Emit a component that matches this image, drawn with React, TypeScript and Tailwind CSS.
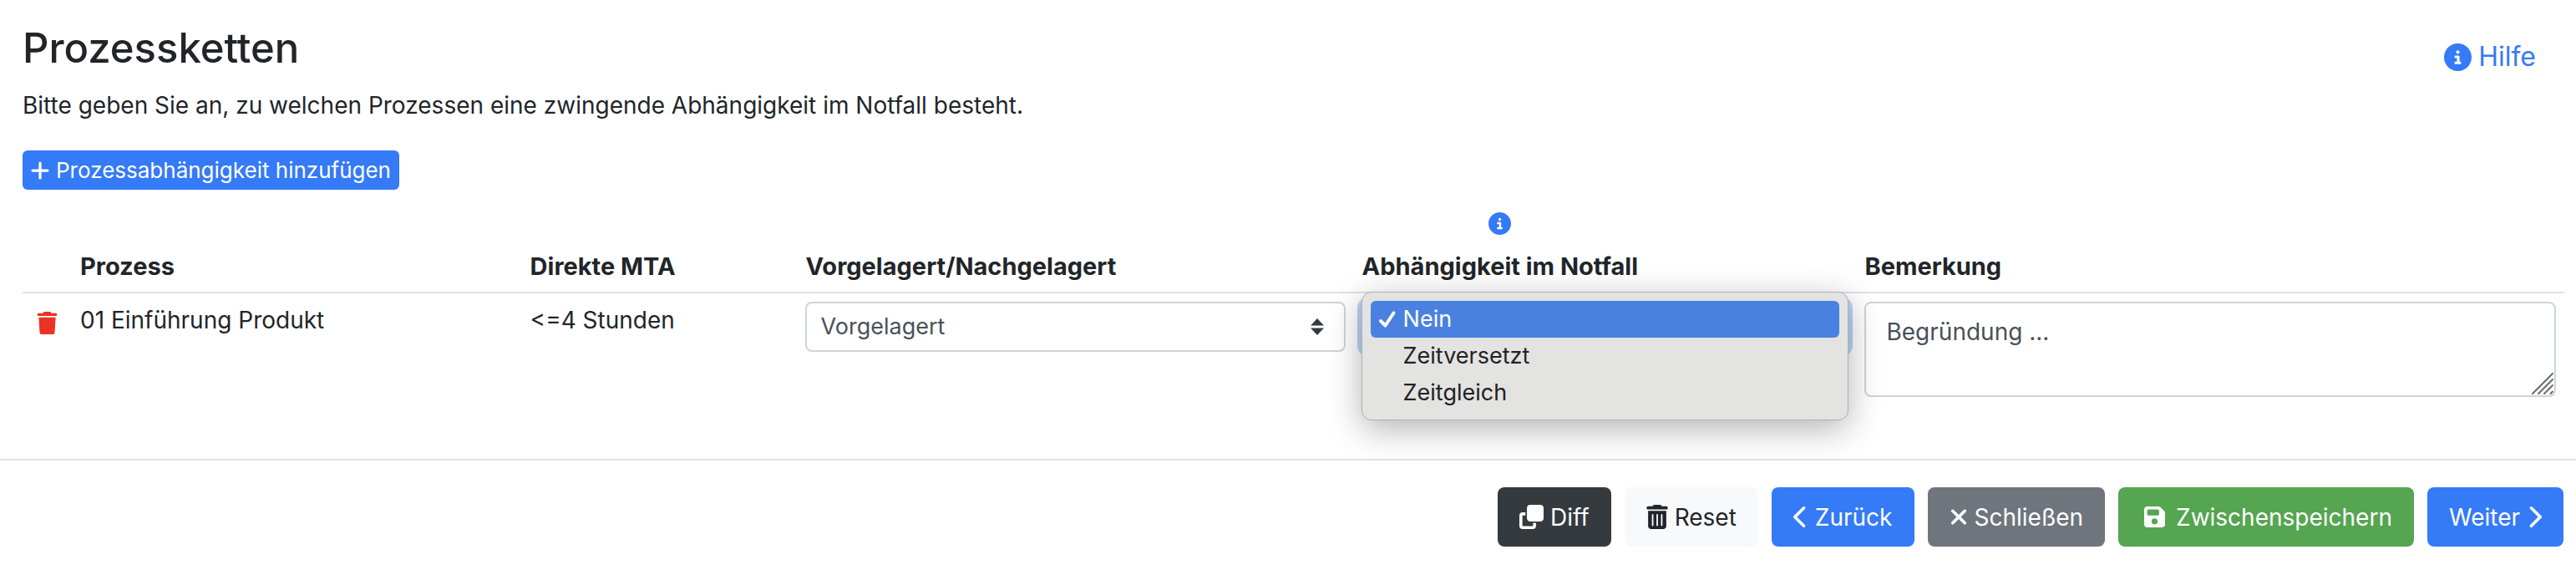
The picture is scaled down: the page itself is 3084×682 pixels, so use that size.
import { useState } from "react";
import {
  FaChevronLeft,
  FaChevronRight,
  FaCircleInfo,
  FaClone,
  FaFloppyDisk,
  FaPlus,
  FaTrash,
  FaTrashCan,
  FaXmark,
} from "react-icons/fa6";

const dependencyOptions = ["Nein", "Zeitversetzt", "Zeitgleich"];

const buttonBase = "flex h-[71px] items-center gap-2 rounded-lg px-[26px]";

function SelectArrows() {
  return (
    <svg
      viewBox="0 0 16 20"
      className="pointer-events-none absolute right-[26px] top-5 h-5 w-4"
      fill="#343a40"
    >
      <path d="M8 0 16 8.5H0zM8 20 0 11.500h16z" />
    </svg>
  );
}

function CheckMark() {
  return (
    <svg
      viewBox="0 0 22 22"
      className="size-[22px]"
      fill="none"
      stroke="currentColor"
      strokeWidth="4"
      strokeLinecap="round"
      strokeLinejoin="round"
    >
      <path d="M3 13 8.500 18.500 18.500 3.500" />
    </svg>
  );
}

function ResizeHandle() {
  return (
    <svg
      viewBox="0 0 26 26"
      className="pointer-events-none absolute bottom-[3px] right-[3px] size-[26px]"
      stroke="#6b6b6b"
      strokeWidth="2"
      strokeLinecap="round"
    >
      <path d="M1 25 25 1M8 25 25 8M15 25 25 15M22.500 25 25 22.500" />
    </svg>
  );
}

export default function App() {
  const [direction, setDirection] = useState("Vorgelagert");
  const [dependency, setDependency] = useState("Nein");
  const [remark, setRemark] = useState("");

  return (
    <div className="bg-white pt-6 font-['Inter',sans-serif] text-[28px] leading-[44px] text-[#212529]">
      <main className="pl-[27px] pr-[14px]">
        {/* Header */}
        <div className="flex items-start justify-between">
          <h1 className="text-[49px] font-medium leading-[68px]">
            Prozessketten
          </h1>
          <a
            href="#hilfe"
            className="mr-[34px] mt-5 flex items-center gap-2 text-[32px] leading-[48px] text-[#357af6]"
          >
            <FaCircleInfo className="size-[33px]" />
            Hilfe
          </a>
        </div>
        <p className="mt-3">
          Bitte geben Sie an, zu welchen Prozessen eine zwingende Abhängigkeit
          im Notfall besteht.
        </p>
        <button className="mt-8 flex h-[47px] items-center gap-[6px] rounded-md bg-[#357af6] pl-2 pr-[10px] text-[26px] text-white">
          <FaPlus className="size-[26px]" />
          Prozessabhängigkeit hinzufügen
        </button>

        {/* Process table */}
        <table className="mt-2 w-full table-fixed text-left">
          <thead className="text-[29px]">
            <tr className="border-b-2 border-[#dee2e6] align-bottom">
              <th className="w-[59px]" aria-label="Aktion" />
              <th className="w-[17.7%] px-[10px] pb-2 font-bold">Prozess</th>
              <th className="w-[10.84%] px-[10px] pb-2 font-bold">
                Direkte MTA
              </th>
              <th className="w-[21.89%] px-[10px] pb-2 font-bold">
                Vorgelagert/Nachgelagert
              </th>
              <th className="w-[19.78%] px-[10px] pb-2 pt-[10px] font-bold">
                <span className="inline-flex flex-col items-center gap-2">
                  <span className="flex h-11 items-center">
                    <FaCircleInfo className="size-[27px] text-[#357af6]" />
                  </span>
                  Abhängigkeit im Notfall
                </span>
              </th>
              <th className="px-[10px] pb-2 font-bold">Bemerkung</th>
            </tr>
          </thead>
          <tbody>
            <tr className="align-top">
              <td className="py-[10px]">
                <button
                  aria-label="Löschen"
                  className="mx-auto flex h-[50px] items-center text-[#eb3323]"
                >
                  <FaTrash className="size-[27px]" />
                </button>
              </td>
              <td className="p-[10px]">01 Einführung Produkt</td>
              <td className="p-[10px]">&lt;=4 Stunden</td>
              <td className="p-[10px]">
                <div className="relative">
                  <select
                    aria-label="Vorgelagert/Nachgelagert"
                    value={direction}
                    onChange={(e) => setDirection(e.target.value)}
                    className="block h-[60px] w-full appearance-none rounded-lg border-2 border-[#ced4da] bg-white px-4 text-[27px] text-[#495057]"
                  >
                    <option>Vorgelagert</option>
                    <option>Nachgelagert</option>
                  </select>
                  <SelectArrows />
                </div>
              </td>
              <td className="p-[10px]">
                <div className="relative">
                  <select
                    aria-label="Abhängigkeit im Notfall"
                    value={dependency}
                    onChange={(e) => setDependency(e.target.value)}
                    className="block h-[60px] w-full appearance-none rounded-lg border-2 border-[#80a9f5] bg-white px-4 text-[27px] text-[#495057] ring-6 ring-[#bcd4fb]"
                  >
                    {dependencyOptions.map((option) => (
                      <option key={option}>{option}</option>
                    ))}
                  </select>
                  <ul
                    role="listbox"
                    aria-label="Abhängigkeit im Notfall"
                    className="absolute -inset-x-px -top-3 z-10 h-[154px] rounded-xl border border-[#b0b0b0] bg-[#e3e3e1] p-[10px] text-[27px] shadow-[0_10px_40px_rgba(0,0,0,0.3)]"
                  >
                    {dependencyOptions.map((option) => (
                      <li
                        key={option}
                        role="option"
                        aria-selected={option === dependency}
                        onClick={() => setDependency(option)}
                        className={`flex items-center gap-2 rounded-md pl-[9px] ${
                          option === dependency
                            ? "bg-[#4a81e0] text-white"
                            : "text-[#222222]"
                        }`}
                      >
                        <span className="w-[22px]">
                          {option === dependency && <CheckMark />}
                        </span>
                        {option}
                      </li>
                    ))}
                  </ul>
                </div>
              </td>
              <td className="p-[10px]">
                <div className="relative">
                  <textarea
                    aria-label="Bemerkung"
                    placeholder="Begründung ..."
                    value={remark}
                    onChange={(e) => setRemark(e.target.value)}
                    className="block h-[114px] w-full resize-none rounded-lg border-2 border-[#ced4da] px-6 py-3 text-[#495057] placeholder:text-[#495057]"
                  />
                  <ResizeHandle />
                </div>
              </td>
            </tr>
          </tbody>
        </table>
      </main>

      {/* Footer actions */}
      <footer className="mt-16 flex flex-wrap justify-end gap-4 border-t-2 border-[#dee2e6] pb-7 pr-[15px] pt-8">
        <button className={`${buttonBase} bg-[#353a3e] text-white`}>
          <FaClone className="size-[29px]" />
          Diff
        </button>
        <button className={`${buttonBase} bg-[#f8f9fb]`}>
          <FaTrashCan className="h-[29px] w-[26px]" />
          Reset
        </button>
        <button className={`${buttonBase} bg-[#357af6] text-white`}>
          <FaChevronLeft className="h-[29px] w-[18px]" />
          Zurück
        </button>
        <button className={`${buttonBase} bg-[#6e757c] text-white`}>
          <FaXmark className="h-[29px] w-[22px]" />
          Schließen
        </button>
        <button className={`${buttonBase} bg-[#55a551] text-white`}>
          <FaFloppyDisk className="mx-[5px] h-[29px] w-[25px]" />
          Zwischenspeichern
        </button>
        <button className={`${buttonBase} bg-[#357af6] text-white`}>
          Weiter
          <FaChevronRight className="h-[29px] w-[18px]" />
        </button>
      </footer>
    </div>
  );
}
